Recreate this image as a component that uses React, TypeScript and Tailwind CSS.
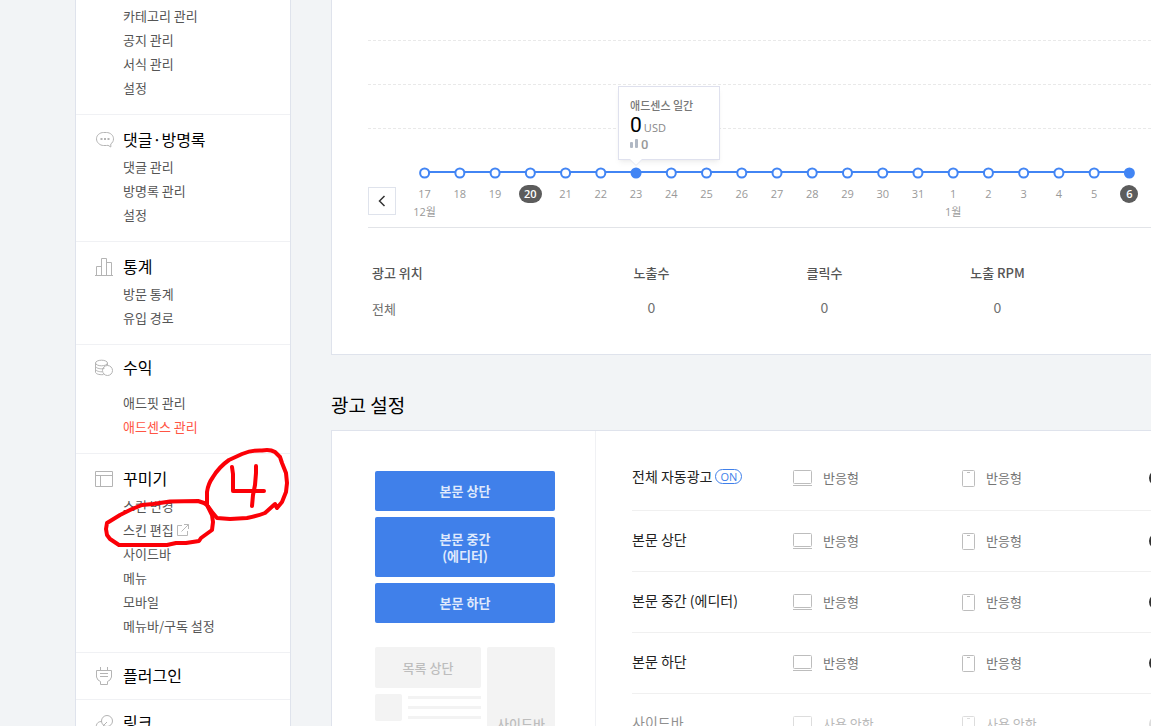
import React from "react";

interface MenuItem {
  label: string;
  active?: boolean;
  external?: boolean;
}

interface MenuSection {
  title?: string;
  icon?: React.ReactNode;
  className: string;
  listClassName?: string;
  items: MenuItem[];
}

interface AdRow {
  name: string;
  desktop: string;
  mobile: string;
  on?: boolean;
  disabled?: boolean;
}

const CommentIcon = () => (
  <svg width="20" height="20" viewBox="0 0 20 20" fill="none" stroke="#b4b4b4">
    <path d="M8.500 2.500h3c3.600 0 7 2.700 7 6.300 0 2.300-1 4-2.700 5.100V17l-2.800-1.700c-.5.100-1 .2-1.500.2h-3c-3.600 0-7-3-7-6.700s3.400-6.300 7-6.300z" />
    <path d="M5.500 9h2M9 9h2M12.500 9h2" strokeWidth="2" />
  </svg>
);

const StatsIcon = () => (
  <svg width="20" height="20" viewBox="0 0 20 20" fill="none" stroke="#b4b4b4">
    <path d="M0 18.500h18M1.500 18V9.500h5M6.500 18V1.500h5V18M11.500 5.500h5V18" />
  </svg>
);

const CoinsIcon = () => (
  <svg width="20" height="20" viewBox="0 0 20 20" fill="none" stroke="#b4b4b4">
    <ellipse cx="6.500" cy="5" rx="6" ry="2.800" />
    <path d="M.5 5v3c0 1.600 2.700 2.800 6 2.800M12.500 5v2.500M.5 8v3c0 1.600 2.700 2.800 6.500 2.800M.5 11v3c0 1.700 3 3 8 2.600" />
    <path d="M6.500 10.800c1 0 2-.1 3-.5" />
    <circle cx="12.500" cy="12.500" r="5" />
  </svg>
);

const LayoutIcon = () => (
  <svg width="20" height="20" viewBox="0 0 20 20" fill="none" stroke="#b4b4b4">
    <path d="M.5 2.500h17v15H.5zM.5 6.500h17M5.500 6.500v11" />
  </svg>
);

const PlugIcon = () => (
  <svg width="20" height="20" viewBox="0 0 20 20" fill="none" stroke="#b4b4b4">
    <path d="M5.500 1v3M12.500 1v3M1.500 4.500h15V11l-1.500 3-2.500 1.500v3h-7v-3L3 14l-1.500-3zM5 7.500h8M5 10.500h8" />
  </svg>
);

const LinkIcon = () => (
  <svg width="20" height="20" viewBox="0 0 20 20" fill="none" stroke="#b4b4b4">
    <circle cx="12" cy="8" r="5.500" />
    <path d="M7 8.500a5.500 5.500 0 1 0 4.500 8M7 14l5-5" />
  </svg>
);

const ExternalIcon = () => (
  <svg width="12" height="12" viewBox="0 0 12 12" fill="none" stroke="#b8b8b8">
    <path d="M5 1.500H.5v10h10V7M7 .5h4.500V5M11.500.5l-7 7" />
  </svg>
);

const DesktopIcon = () => (
  <svg width="19" height="17" viewBox="0 0 19 17" fill="none" stroke="#bdbdbd">
    <rect x=".5" y=".5" width="18" height="13" rx="1" />
    <path d="M0 15.500h19" />
  </svg>
);

const PhoneIcon = () => (
  <svg width="13" height="17" viewBox="0 0 13 17" fill="none" stroke="#bdbdbd">
    <rect x=".5" y=".5" width="12" height="16" rx="1" />
    <path d="M5 2.500h3" />
  </svg>
);

const sections: MenuSection[] = [
  {
    className: "pt-1 pb-[14px]",
    items: [
      { label: "카테고리 관리" },
      { label: "공지 관리" },
      { label: "서식 관리" },
      { label: "설정" },
    ],
  },
  {
    title: "댓글·방명록",
    icon: <CommentIcon />,
    className: "pt-3 pb-[14px]",
    listClassName: "mt-1",
    items: [{ label: "댓글 관리" }, { label: "방명록 관리" }, { label: "설정" }],
  },
  {
    title: "통계",
    icon: <StatsIcon />,
    className: "pt-3 pb-[14px]",
    listClassName: "mt-1",
    items: [{ label: "방문 통계" }, { label: "유입 경로" }],
  },
  {
    title: "수익",
    icon: <CoinsIcon />,
    className: "pt-[10px] pb-[14px]",
    listClassName: "mt-3",
    items: [{ label: "애드핏 관리" }, { label: "애드센스 관리", active: true }],
  },
  {
    title: "꾸미기",
    icon: <LayoutIcon />,
    className: "pt-3 pb-[14px]",
    listClassName: "mt-1",
    items: [
      { label: "스킨 변경" },
      { label: "스킨 편집", external: true },
      { label: "사이드바" },
      { label: "메뉴" },
      { label: "모바일" },
      { label: "메뉴바/구독 설정" },
    ],
  },
  { title: "플러그인", icon: <PlugIcon />, className: "pt-[10px] pb-3", items: [] },
  { title: "링크", icon: <LinkIcon />, className: "pt-[10px] pb-3", items: [] },
];

const days = [17, 18, 19, 20, 21, 22, 23, 24, 25, 26, 27, 28, 29, 30, 31, 1, 2, 3, 4, 5, 6];
const months: Record<number, string> = { 0: "12월", 15: "1월" };
const markedDays = [20, 6];
const hoveredIndex = 6;

const adRows: AdRow[] = [
  { name: "전체 자동광고", desktop: "반응형", mobile: "반응형", on: true },
  { name: "본문 상단", desktop: "반응형", mobile: "반응형" },
  { name: "본문 중간 (에디터)", desktop: "반응형", mobile: "반응형" },
  { name: "본문 하단", desktop: "반응형", mobile: "반응형" },
  { name: "사이드바", desktop: "사용 안함", mobile: "사용 안함", disabled: true },
];

const pointX = (index: number) => `${((index + 0.5) / days.length) * 100}%`;

function Sidebar() {
  return (
    <nav className="ml-[75px] w-[216px] shrink-0 border-x border-[#dfe3ec] bg-white">
      {sections.map((section, index) => (
        <section
          key={index}
          className={`border-b border-[#f0f1f4] pl-[19px] ${section.className}`}>
          {section.title && (
            <h2 className="flex h-6 items-center text-base leading-6 text-black">
              <span className="w-7 pt-[2px]">{section.icon}</span>
              <a href="#">{section.title}</a>
            </h2>
          )}
          {section.items.length > 0 && (
            <ul className={`pl-7 ${section.listClassName ?? ""}`}>
              {section.items.map((item) => (
                <li key={item.label} className="h-6 text-[13px] leading-6">
                  <a
                    href="#"
                    className={`flex items-center gap-[3px] ${
                      item.active ? "text-[#ff5544]" : "text-[#555]"
                    }`}>
                    {item.label}
                    {item.external && <ExternalIcon />}
                  </a>
                </li>
              ))}
            </ul>
          )}
        </section>
      ))}
    </nav>
  );
}

function ChartTooltip() {
  return (
    <div
      className="absolute -top-[43px] -ml-[18px] h-[74px] w-[102px] border border-[#dfe1ee] bg-white pt-[10px] pl-[11px] shadow-md shadow-black/5"
      style={{ left: pointX(hoveredIndex) }}>
      <p className="text-[11px] leading-4 font-medium text-[#777]">애드센스 일간</p>
      <p className="flex h-6 items-baseline gap-[2px]">
        <span className="font-['Roboto'] text-[21px] leading-6 text-black">0</span>
        <span className="font-['Open_Sans'] text-[11px] leading-3 text-[#888]">USD</span>
      </p>
      <p className="flex items-center gap-[3px] font-['Roboto'] text-[13px] leading-4 font-medium text-[#999]">
        <svg width="8" height="12" viewBox="0 0 8 12" fill="#b0b8c4">
          <rect y="3" width="3" height="6" rx="1" />
          <rect x="5" width="3" height="9" rx="1" />
        </svg>
        0
      </p>
      <svg className="absolute top-[72px] left-[11px]" width="12" height="7" viewBox="0 0 12 7">
        <path d="M0 0l6 6 6-6z" fill="#fff" />
        <path d="M0 .5l6 6 6-6" fill="none" stroke="#e6e8f1" />
      </svg>
    </div>
  );
}

function RevenueCard() {
  return (
    <section className="border-b border-l border-[#dfe3ec] bg-white pb-[27px] pl-9">
      <svg className="block h-[129px] w-full" stroke="#e9e9e9" strokeDasharray="3 2">
        <line x1="0" x2="100%" y1="40.5" y2="40.5" />
        <line x1="0" x2="100%" y1="84.5" y2="84.5" />
        <line x1="0" x2="100%" y1="128.5" y2="128.5" />
      </svg>
      <div className="flex h-[99px] gap-[11px] border-b border-[#e2e4e8] pr-1">
        <button
          aria-label="이전"
          className="mt-[58px] flex size-7 shrink-0 items-center justify-center border border-[#dfe3ec] bg-white">
          <svg width="8" height="12" viewBox="0 0 8 12" fill="none" stroke="#333" strokeWidth="1.5">
            <path d="M6.500 1l-5 5 5 5" />
          </svg>
        </button>
        <div className="relative flex-1">
          <svg className="block h-14 w-full" stroke="#4285f4" strokeWidth="2">
            <line x1={pointX(0)} x2={pointX(days.length - 1)} y1="43" y2="43" />
            {days.map((day, index) => (
              <circle
                key={day}
                cx={pointX(index)}
                cy="44"
                r="4.5"
                fill={index === hoveredIndex || index === days.length - 1 ? "#4285f4" : "#fff"}
              />
            ))}
          </svg>
          <ol className="grid grid-cols-[repeat(21,minmax(0,1fr))] font-['Open_Sans','Noto_Sans_CJK_KR',sans-serif] text-[11px] leading-[18px] text-[#999]">
            {days.map((day, index) => (
              <li key={day} className="flex flex-col items-center">
                <span
                  className={
                    markedDays.includes(day)
                      ? "min-w-[18px] rounded-full bg-[#5c5c5c] px-[5px] text-center font-semibold text-white"
                      : ""
                  }>
                  {day}
                </span>
                {months[index] && <span>{months[index]}</span>}
              </li>
            ))}
          </ol>
          <ChartTooltip />
        </div>
      </div>
      <table className="mt-[27px] w-[716px] table-fixed text-[13px]">
        <thead>
          <tr className="h-9 text-[#555]">
            <th className="w-[197px] pl-1 text-left font-medium">광고 위치</th>
            <th className="font-medium">노출수</th>
            <th className="font-medium">클릭수</th>
            <th className="font-medium">노출 RPM</th>
          </tr>
        </thead>
        <tbody>
          <tr className="h-9 text-center text-[#707070]">
            <td className="pl-1 text-left">전체</td>
            <td className="pb-1 text-sm">0</td>
            <td className="pb-1 text-sm">0</td>
            <td className="pb-1 text-sm">0</td>
          </tr>
        </tbody>
      </table>
    </section>
  );
}

function AdPreview() {
  return (
    <div className="w-[263px] shrink-0 pt-10 pl-[43px] text-[13px]">
      <div className="flex w-[180px] flex-col gap-[6px] font-bold text-[#dfe9fc]">
        <button className="h-10 rounded-xs bg-[#4080ea]">본문 상단</button>
        <button className="h-[60px] rounded-xs bg-[#4080ea] leading-[17px]">
          본문 중간
          <br />
          (에디터)
        </button>
        <button className="h-10 rounded-xs bg-[#4080ea]">본문 하단</button>
      </div>
      <div className="mt-6 flex w-[180px] gap-[6px] font-medium text-[#bdbdbd]">
        <div className="flex flex-1 flex-col gap-[6px]">
          <button className="h-[41px] rounded-xs bg-[#f3f3f3]">목록 상단</button>
          <div className="flex gap-[6px]">
            <div className="size-[27px] rounded-xs bg-[#f3f3f3]" />
            <div className="flex flex-1 flex-col gap-[7px] pt-[2px]">
              <div className="h-[3px] bg-[#f3f3f3]" />
              <div className="h-[3px] bg-[#f3f3f3]" />
              <div className="h-[3px] bg-[#f3f3f3]" />
            </div>
          </div>
        </div>
        <button className="h-[154px] w-[68px] rounded-xs bg-[#f3f3f3]">사이드바</button>
      </div>
    </div>
  );
}

function AdSettings() {
  return (
    <section className="flex border-t border-l border-[#dfe3ec] bg-white">
      <AdPreview />
      <ul className="flex-1 border-l border-[#f0f1f4] pt-[15px] pl-9">
        {adRows.map((row, index) => (
          <li
            key={row.name}
            className={`grid grid-cols-[161px_169px_187px_32px] items-center border-b border-[#f0f0f0] text-[13px] text-[#757575] ${
              index === 0 ? "h-[65px]" : "h-[61px]"
            }`}>
            <span
              className={`flex items-center gap-[3px] pb-1 text-sm text-[#222] ${
                row.disabled ? "opacity-50" : ""
              }`}>
              {row.name}
              {row.on && (
                <span className="h-[15px] rounded-full border border-[#4080ea] px-1 font-['Open_Sans'] text-[11px] leading-[13px] text-[#4080ea]">
                  ON
                </span>
              )}
            </span>
            <span className={`flex items-center gap-[11px] ${row.disabled ? "opacity-50" : ""}`}>
              <DesktopIcon />
              {row.desktop}
            </span>
            <span className={`flex items-center gap-[11px] ${row.disabled ? "opacity-50" : ""}`}>
              <PhoneIcon />
              {row.mobile}
            </span>
            <button
              aria-label={row.name}
              className={`h-4 w-8 rounded-full ${row.disabled ? "bg-[#ddd]" : "bg-[#333]"}`}
            />
          </li>
        ))}
      </ul>
    </section>
  );
}

// Hand-drawn marker strokes over the menu
function MarkerNote() {
  return (
    <svg
      className="pointer-events-none absolute top-[440px] left-[95px]"
      width="200"
      height="115"
      viewBox="95 440 200 115"
      fill="none"
      stroke="#fb0007"
      strokeWidth="4"
      strokeLinecap="round"
      strokeLinejoin="round">
      <path d="M207 505L207 492Q208 484 213 477Q219 467 229 460L242 454Q252 450 262 450.500Q270 449 275 452L280 457L282 463L286 473L287 483L286 492L282 502L277 508L275 504L265 513Q257 516 247 518L230 519L217 518L212 512L207 505" />
      <path d="M207 505L204 503L198 501L170 501.500L153 504L142 505L132 509L120 515L107 523L106 529L107 535L110 539L119 545L145 545L167 545L176 543L186 543L199 541L201 538L212 530L213 522L212 515L207 505" />
      <path d="M232 467L233 474L233 491L264 491" />
      <path d="M256 466L256 473L255 485L253 495L252 506" />
    </svg>
  );
}

export default function App() {
  return (
    <div className="relative flex h-screen overflow-hidden bg-[#f2f4f6] font-['Noto_Sans_CJK_KR',sans-serif]">
      <Sidebar />
      <main className="ml-10 min-w-0 flex-1">
        <RevenueCard />
        <h1 className="mt-[35px] mb-[10px] text-[19px] leading-[30px] text-black">광고 설정</h1>
        <AdSettings />
      </main>
      <MarkerNote />
    </div>
  );
}
